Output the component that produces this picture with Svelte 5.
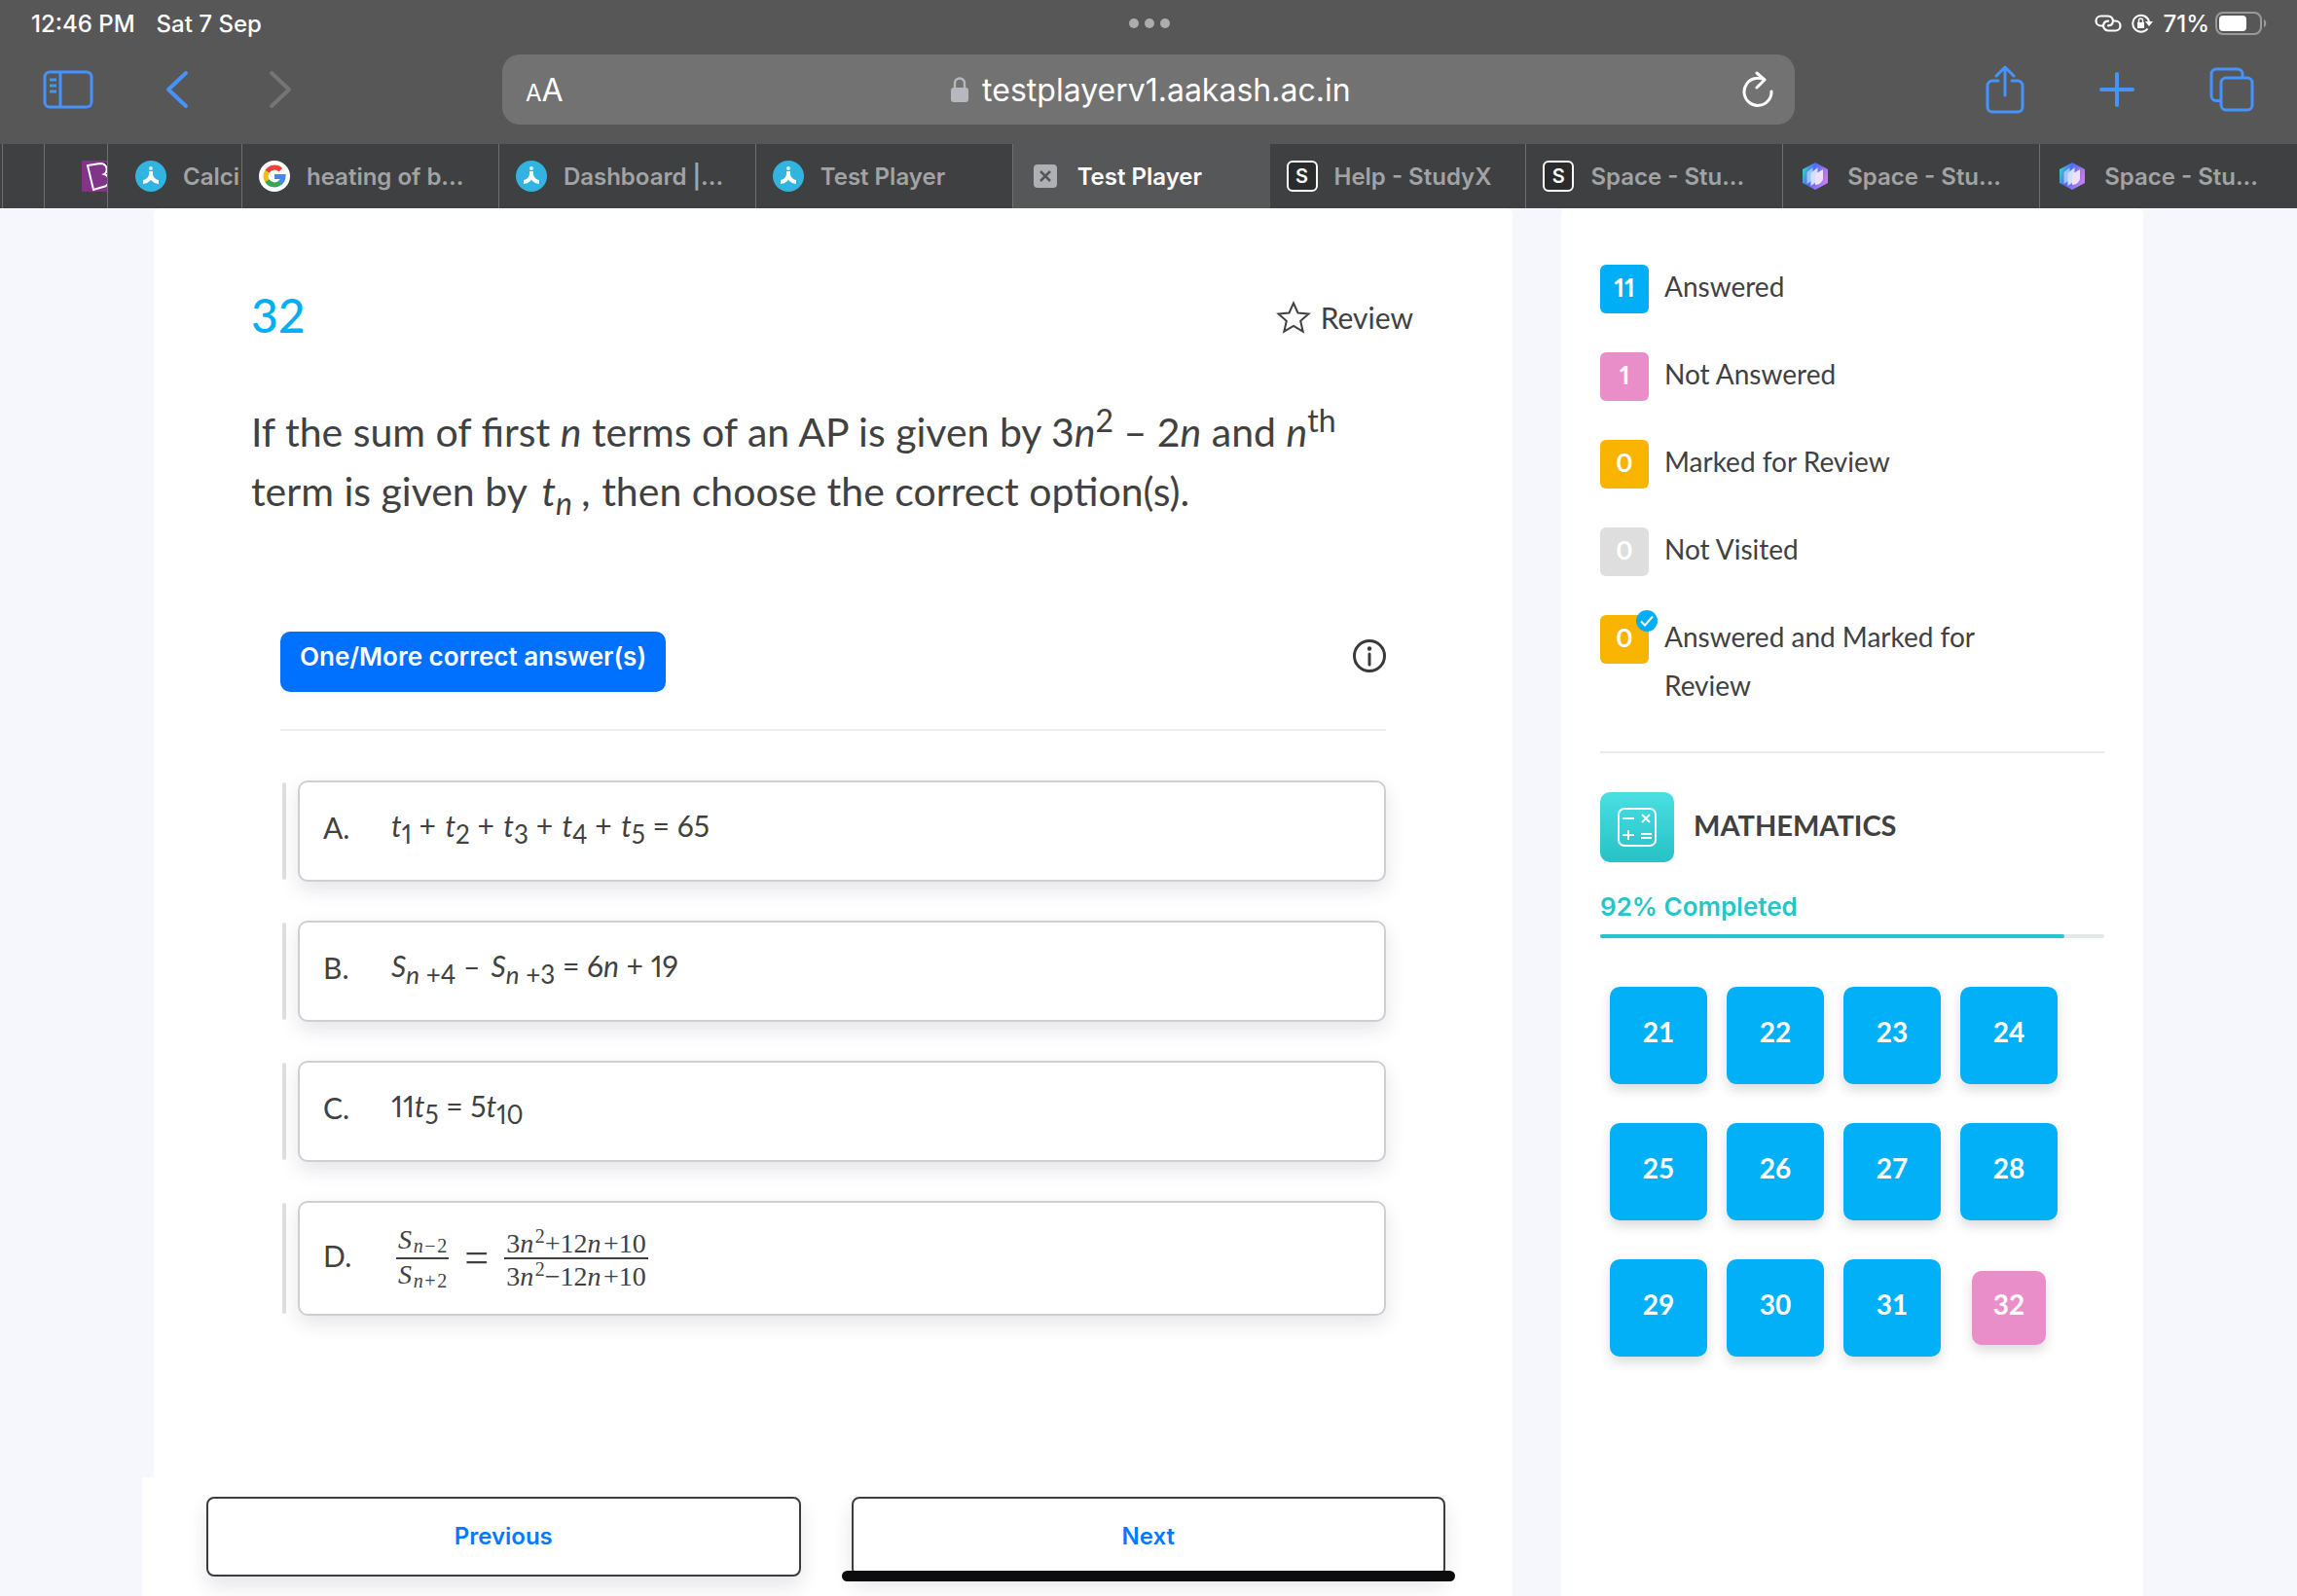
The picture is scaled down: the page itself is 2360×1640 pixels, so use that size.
<script>
  const tabs = [
    { icon: 'aakash', title: 'Dashboard |...' },
    { icon: 'aakash', title: 'Test Player' },
    { icon: 'close', title: 'Test Player', active: true },
    { icon: 'studyx', title: 'Help - StudyX' },
    { icon: 'studyx', title: 'Space - Stu...' },
    { icon: 'prism', title: 'Space - Stu...' },
    { icon: 'prism', title: 'Space - Stu...' }
  ];

  const legend = [
    { count: 11, label: 'Answered', kind: 'answered' },
    { count: 1, label: 'Not Answered', kind: 'not-answered' },
    { count: 0, label: 'Marked for Review', kind: 'marked' },
    { count: 0, label: 'Not Visited', kind: 'not-visited' },
    { count: 0, label: 'Answered and Marked for Review', kind: 'marked', checked: true }
  ];

  const questions = Array.from({ length: 12 }, (_, i) => 21 + i);
  const progress = 92;

  let current = $state(32);
  let selected = $state([]);
</script>

{#snippet favicon(name)}
  {#if name === 'aakash'}
    <svg class="favicon" viewBox="0 0 32 32">
      <circle cx="16" cy="16" r="16" fill="#31b4e0" />
      <path d="M16 11v4M16 14c0 4-4 8-8 8M16 14c0 4 4 8 8 8" fill="none" stroke="#fff" stroke-width="4" />
      <circle cx="16" cy="8" r="2" fill="#d9f1fa" />
    </svg>
  {:else if name === 'google'}
    <svg class="favicon" viewBox="0 0 32 32">
      <circle cx="16" cy="16" r="16" fill="#fff" />
      <g fill="none" stroke-width="5">
        <path d="M8.4 11.4A9 9 0 0 1 22.4 9.7" stroke="#ea4335" />
        <path d="M8.4 20.6A9 9 0 0 1 8.4 11.4" stroke="#fbbc05" />
        <path d="M22 22.7A9 9 0 0 1 8.4 20.6" stroke="#34a853" />
        <path d="M16 16.4h9A9 9 0 0 1 21.6 23" stroke="#4285f4" />
      </g>
    </svg>
  {:else if name === 'studyx'}
    <span class="favicon studyx">S</span>
  {:else if name === 'prism'}
    <svg class="favicon" viewBox="0 0 32 32">
      <defs>
        <linearGradient id="prism" x1="0" y1="0" x2="1" y2="0.4">
          <stop offset="0" stop-color="#2df0c0" />
          <stop offset="0.45" stop-color="#4b6cf5" />
          <stop offset="1" stop-color="#c07bf5" />
        </linearGradient>
      </defs>
      <path d="M16 2l13 7v14l-13 7-13-7V9z" fill="url(#prism)" />
      <path d="M7.500 12l6-5v13l-6 4z" fill="#9fc3fb" />
      <path d="M11.500 13l7-6v14l-7 5z" fill="#d3e0fd" />
      <path d="M16 14l8-5v9c0 4-4 7-8 7z" fill="#efe2fd" />
    </svg>
  {:else if name === 'byjus'}
    <svg class="favicon" viewBox="0 0 32 32">
      <path d="M0 0h32v32H0z" fill="#813588" />
      <path d="M8 4l14-2c8 0 8 9 4 12 6 2 5 12-2 13l-10 3z" fill="#4c1a52" />
      <path d="M6 5l13-2c8 0 8 9 4 11 7 2 6 12-1 13l-10 3z" fill="#813588" stroke="#fff" stroke-width="2" />
    </svg>
  {:else}
    <svg class="favicon" viewBox="0 0 32 32">
      <rect x="4" y="4" width="24" height="24" rx="4" fill="#aeb0b3" />
      <path d="M11 11l10 10M21 11L11 21" stroke="#55565a" stroke-width="2.500" />
    </svg>
  {/if}
{/snippet}

{#snippet option(letter, body)}
  <div class="option">
    <button class="option-box" class:tall={letter === 'D'} onclick={() => selected.push(letter)}>
      <span class="letter">{letter}.</span>
      {@render body()}
    </button>
  </div>
{/snippet}

{#snippet optionA()}
  <span class="formula"><i>t</i><sub>1</sub> + <i>&hairsp;t</i><sub>2</sub> + <i>&hairsp;t</i><sub>3</sub> + <i>&hairsp;t</i><sub>4</sub> + <i>&hairsp;t</i><sub>5</sub> = 65</span>
{/snippet}
{#snippet optionB()}
  <span class="formula"><i>S</i><sub><i>n</i> +4</sub> – <i>&thinsp;S</i><sub><i>n</i> +3</sub> = 6<i>n</i> + 19</span>
{/snippet}
{#snippet optionC()}
  <span class="formula">11<i>t</i><sub>5</sub> = 5<i>t</i><sub>10</sub></span>
{/snippet}
{#snippet optionD()}
  <span class="math">
    <span class="frac subscripted">
      <span><i>S</i><sub>&hairsp;<i>n</i>&hairsp;−&hairsp;2</sub></span>
      <span><i>S</i><sub>&hairsp;<i>n</i>&hairsp;+&hairsp;2</sub></span>
    </span>
    <span class="equals">=</span>
    <span class="frac">
      <span>3<i>n</i><sup>&hairsp;2</sup>+12<i>n</i>&hairsp;+10</span>
      <span>3<i>n</i><sup>&hairsp;2</sup>−12<i>n</i>&hairsp;+10</span>
    </span>
  </span>
{/snippet}

<div class="screen">
  <header class="chrome">
    <div class="status">
      <div class="status-side">
        <span>12:46 PM</span>
        <span>Sat 7 Sep</span>
      </div>
      <div class="dots"><span></span><span></span><span></span></div>
      <div class="status-side right">
        <svg width="28" height="18" viewBox="0 0 28 18" fill="none" stroke="#fff" stroke-width="2.200" stroke-linecap="round">
          <path d="M8.500 11.500H6.500a5 5 0 0 1 0-10H14a5 5 0 0 1 4.500 7.200c-1 2-2.500 2.600-4.500 2.600" />
          <path d="M19.500 6.500h2a5 5 0 0 1 0 10H14A5 5 0 0 1 9.500 9.300c1-2 2.500-2.600 4.500-2.600" />
        </svg>
        <svg width="22" height="20" viewBox="0 0 22 20" fill="none" stroke="#fff" stroke-width="2">
          <path d="M16.500 15.500A8.500 8.500 0 1 1 18 8" />
          <path d="M14 8h8l-4 5z" fill="#fff" stroke="none" />
          <path d="M6 9h7v6H6z" fill="#fff" stroke="none" />
          <path d="M7.500 9V7a2 2 0 0 1 4 0v2" stroke-width="1.500" />
        </svg>
        <span>71%</span>
        <svg class="battery" width="54" height="24" viewBox="0 0 54 24">
          <rect x="1" y="1" width="46" height="22" rx="7" fill="none" stroke="#9a9a9a" stroke-width="2" />
          <rect x="4" y="4" width="28" height="16" rx="4" fill="#fff" />
          <path d="M50 8c3 1 3 7 0 8z" fill="#9a9a9a" />
        </svg>
      </div>
    </div>

    <div class="toolbar">
      <div class="tools">
        <button class="tool" aria-label="Sidebar">
          <svg width="52" height="40" viewBox="0 0 52 40" fill="none" stroke="#4593ff" stroke-width="3">
            <rect x="2" y="2" width="48" height="36" rx="5" />
            <path d="M18 2v36M7 10h7M7 16h7M7 22h7" />
          </svg>
        </button>
        <button class="tool back" aria-label="Back">
          <svg width="24" height="40" viewBox="0 0 24 40" fill="none" stroke="#4593ff" stroke-width="4" stroke-linecap="round" stroke-linejoin="round">
            <path d="M21 3L3 20l18 17" />
          </svg>
        </button>
        <button class="tool forward" aria-label="Forward" disabled>
          <svg width="24" height="40" viewBox="0 0 24 40" fill="none" stroke="#757575" stroke-width="4" stroke-linecap="round" stroke-linejoin="round">
            <path d="M3 3l18 17L3 37" />
          </svg>
        </button>
      </div>
      <div class="address">
        <button class="text-size" aria-label="Text size"><small>A</small>A</button>
        <div class="url">
          <svg width="18" height="28" viewBox="0 0 18 28">
            <rect y="12" width="18" height="15" rx="3" fill="#b7b8bf" />
            <path d="M4 13V7.500a5 5 0 0 1 10 0V13" fill="none" stroke="#b7b8bf" stroke-width="2.400" />
          </svg>
          <span>testplayerv1.aakash.ac.in</span>
        </div>
        <button class="tool" aria-label="Reload">
          <svg width="32" height="38" viewBox="0 0 32 38" fill="none" stroke="#fff" stroke-width="3" stroke-linecap="round" stroke-linejoin="round">
            <path d="M22 8.500C19 7 16 7 13.500 7.600A14 14 0 1 0 30 21" />
            <path d="M15 2l8 7-8 8" />
          </svg>
        </button>
      </div>
      <div class="tools end">
        <button class="tool" aria-label="Share">
          <svg width="40" height="50" viewBox="0 0 40 50" fill="none" stroke="#4593ff" stroke-width="3" stroke-linecap="round" stroke-linejoin="round">
            <path d="M13 16H7a5 5 0 0 0-5 5v22a5 5 0 0 0 5 5h26a5 5 0 0 0 5-5V21a5 5 0 0 0-5-5h-6" />
            <path d="M20 31V3M11 11l9-9 9 9" />
          </svg>
        </button>
        <button class="tool" aria-label="New tab">
          <svg width="36" height="36" viewBox="0 0 36 36" stroke="#4593ff" stroke-width="4" stroke-linecap="round">
            <path d="M18 2v32M2 18h32" />
          </svg>
        </button>
        <button class="tool" aria-label="All tabs">
          <svg width="46" height="46" viewBox="0 0 46 46" fill="none" stroke="#4593ff" stroke-width="3">
            <path d="M12 34.500H7a5 5 0 0 1-5-5V7a5 5 0 0 1 5-5h22a5 5 0 0 1 5 5v4" />
            <rect x="12" y="11" width="32" height="33" rx="5" />
          </svg>
        </button>
      </div>
    </div>

    <nav class="tabs">
      <div class="tab stub"></div>
      <div class="tab sliver"></div>
      <button class="tab byjus" aria-label="Byju's">{@render favicon('byjus')}</button>
      <button class="tab calci">{@render favicon('aakash')}<span>Calci</span></button>
      <button class="tab wide">{@render favicon('google')}<span>heating of b...</span></button>
      {#each tabs as tab}
        <button class="tab wide" class:active={tab.active}>
          {@render favicon(tab.icon)}<span>{tab.title}</span>
        </button>
      {/each}
    </nav>
  </header>

  <div class="page">
    <main class="question-card">
      <div class="question">
        <div class="question-head">
          <h1>{current}</h1>
          <button class="review">
            <svg width="36" height="34" viewBox="0 0 36 34" fill="none" stroke="#414141" stroke-width="2">
              <path d="M18 2.500l4.500 10 11 1-8.300 7.300 2.500 10.900L18 26l-9.700 5.700 2.500-10.900L2.500 13.500l11-1z" />
            </svg>
            Review
          </button>
        </div>
        <p class="prompt">
          If the sum of first <i>n</i> terms of an AP is given by 3<i>n</i><sup>2</sup> – 2<i>n</i> and <i>n</i><sup>th</sup><br />
          term is given by &thinsp;<i>t</i><sub><i>n</i></sub> <i>,</i> then choose the correct option(s).
        </p>

        <div class="answers">
          <div class="answers-head">
            <span class="type-badge">One/More correct answer(s)</span>
            <button class="info" aria-label="Information">
              <svg width="34" height="34" viewBox="0 0 34 34">
                <circle cx="17" cy="17" r="15.500" fill="none" stroke="#3a3a3a" stroke-width="3" />
                <circle cx="17" cy="9.500" r="2.200" fill="#3a3a3a" />
                <path d="M17 15v11" stroke="#3a3a3a" stroke-width="3" stroke-linecap="round" />
              </svg>
            </button>
          </div>
          <div class="options">
            {@render option('A', optionA)}
            {@render option('B', optionB)}
            {@render option('C', optionC)}
            {@render option('D', optionD)}
          </div>
        </div>
      </div>

      <footer class="pager">
        <button>Previous</button>
        <button>Next</button>
      </footer>
    </main>

    <aside class="summary">
      <ul class="legend">
        {#each legend as item}
          <li>
            <span class="count {item.kind}">
              {item.count}
              {#if item.checked}
                <svg class="check" width="22" height="22" viewBox="0 0 22 22">
                  <circle cx="11" cy="11" r="11" fill="#00aef6" />
                  <path d="M5 11.500l4 4 8-9" fill="none" stroke="#fff" stroke-width="2" />
                </svg>
              {/if}
            </span>
            <span class="legend-label">{item.label}</span>
          </li>
        {/each}
      </ul>

      <div class="subject">
        <svg width="76" height="72" viewBox="0 0 76 72">
          <defs>
            <linearGradient id="teal" x1="0" y1="0" x2="0" y2="1">
              <stop offset="0" stop-color="#4adfe3" />
              <stop offset="1" stop-color="#26c2c6" />
            </linearGradient>
          </defs>
          <rect width="76" height="72" rx="10" fill="url(#teal)" />
          <g fill="none" stroke="#fff" stroke-width="2">
            <rect x="19" y="17" width="38" height="38" rx="6" />
            <path d="M23 27h12M43 23l8 8M51 23l-8 8M23 44h12M29 39v10M42 43h11M42 47h11" />
          </g>
        </svg>
        <h2>MATHEMATICS</h2>
      </div>

      <div class="completed">{progress}% Completed</div>
      <div class="progress"><div class="progress-fill" style="width: {progress}%"></div></div>

      <div class="palette">
        {#each questions as q}
          <button class:current={q === 32} onclick={() => (current = q)}>{q}</button>
        {/each}
      </div>
    </aside>
  </div>

  <div class="home-indicator"></div>
</div>

<style>
  :global(body) {
    background: #f5f7fc;
  }

  .screen {
    position: relative;
    display: flex;
    flex-direction: column;
    height: 100vh;
    overflow: hidden;
    background: #f5f7fc;
    color: #414141;
    font-family: Lato, sans-serif;
  }

  button {
    margin: 0;
    padding: 0;
    border: none;
    background: none;
    color: inherit;
    font: inherit;
    cursor: pointer;
  }

  svg {
    display: block;
    flex-shrink: 0;
  }

  /* browser chrome */
  .chrome {
    flex-shrink: 0;
    background: #575757;
    color: #fff;
    font-family: Inter, sans-serif;
  }

  .status {
    display: grid;
    grid-template-columns: 1fr auto 1fr;
    align-items: center;
    height: 48px;
    padding: 0 30px 0 32px;
    font-size: 24px;
    font-weight: 500;
  }

  .status-side {
    display: flex;
    align-items: center;
    gap: 22px;
  }

  .status-side.right {
    justify-content: flex-end;
    gap: 10px;
  }

  .battery {
    margin-left: -4px;
  }

  .dots {
    display: flex;
    gap: 6px;
  }

  .dots span {
    width: 10px;
    height: 10px;
    border-radius: 50%;
    background: #adadad;
  }

  .toolbar {
    display: flex;
    align-items: center;
    height: 72px;
    padding: 8px 44px 20px;
  }

  .tools {
    display: flex;
    flex: 1;
    align-items: center;
  }

  .tools.end {
    justify-content: flex-end;
    gap: 77px;
  }

  .back {
    margin-left: 74px;
  }

  .forward {
    margin-left: 82px;
  }

  .address {
    display: flex;
    flex: 0 1 1282px;
    align-items: center;
    height: 72px;
    padding: 0 22px 0 24px;
    border-radius: 18px;
    background: #727272;
  }

  .text-size {
    font-size: 32px;
  }

  .text-size small {
    font-size: 24px;
  }

  .url {
    display: flex;
    flex: 1;
    justify-content: center;
    align-items: center;
    gap: 14px;
    padding-right: 4px;
    font-size: 32px;
  }

  .tabs {
    display: flex;
    height: 66px;
  }

  .tab {
    display: flex;
    flex-shrink: 0;
    align-items: center;
    gap: 17px;
    box-sizing: border-box;
    overflow: hidden;
    border-right: 1px solid #6e6f71;
    background: #3f4042;
    color: #a2a3a5;
    font-size: 24px;
    font-weight: 600;
    white-space: nowrap;
  }

  .stub {
    width: 3px;
  }

  .sliver {
    width: 43px;
  }

  .byjus {
    width: 65px;
    padding-left: 38px;
  }

  .calci {
    width: 138px;
    padding-left: 28px;
  }

  .wide {
    flex: 1;
    padding-left: 17px;
  }

  .wide:last-child {
    border-right-color: #3f4042;
  }

  .tab.active {
    border-color: #565759;
    background: #565759;
    color: #fff;
  }

  .favicon {
    width: 32px;
    height: 32px;
  }

  .studyx {
    display: flex;
    flex-shrink: 0;
    justify-content: center;
    align-items: center;
    box-sizing: border-box;
    border: 2px solid #fff;
    border-radius: 6px;
    background: #2b2b2b;
    color: #fff;
    font-size: 20px;
  }

  /* page */
  .page {
    display: flex;
    flex: 1;
    justify-content: space-between;
    gap: 50px;
    min-height: 0;
    padding: 0 158px 0 146px;
  }

  .question-card {
    display: flex;
    flex: 1;
    flex-direction: column;
  }

  .question {
    flex: 1;
    margin-left: 12px;
    padding: 76px 100px 0;
    border-radius: 6px 6px 0 0;
    background: #fff;
  }

  .question-head {
    display: flex;
    justify-content: space-between;
    align-items: center;
    height: 72px;
    padding-right: 2px;
  }

  h1 {
    margin: 0;
    padding-bottom: 6px;
    color: #00aef6;
    font-size: 48px;
    font-weight: 500;
  }

  .review {
    display: flex;
    align-items: center;
    gap: 10px;
    font-size: 30px;
  }

  .prompt {
    margin: 51px 0 114px;
    font-size: 41px;
    line-height: 61px;
  }

  .prompt sup,
  .prompt sub {
    font-size: 32px;
    line-height: 0;
  }

  .formula {
    padding-bottom: 4px;
    font-variant-numeric: proportional-nums;
  }

  .formula sub {
    font-size: 26px;
    line-height: 0;
  }

  .answers {
    padding: 0 30px;
  }

  .answers-head {
    display: flex;
    justify-content: space-between;
    align-items: flex-start;
    padding-bottom: 38px;
    border-bottom: 2px solid #eeebec;
  }

  .type-badge {
    padding: 8px 20px 18px;
    border-radius: 10px;
    background: #0070ff;
    color: #fff;
    font-family: Inter, sans-serif;
    font-size: 26px;
    font-weight: 600;
    line-height: 36px;
  }

  .info {
    margin-top: 8px;
  }

  .options {
    display: flex;
    flex-direction: column;
    gap: 40px;
    padding-top: 51px;
  }

  .option {
    display: flex;
    gap: 12px;
    padding-left: 2px;
  }

  .option::before {
    width: 4px;
    margin: 2px 0;
    border-radius: 2px;
    background: #dedede;
    content: '';
  }

  .option-box {
    display: flex;
    flex: 1;
    align-items: center;
    box-sizing: border-box;
    height: 104px;
    padding: 0 24px 8px;
    border: 2px solid #cfcfcf;
    border-radius: 10px;
    background: #fff;
    box-shadow: 0 8px 20px rgba(40, 40, 70, 0.12);
    font-size: 30px;
    text-align: left;
  }

  .option-box.tall {
    height: 118px;
    padding-bottom: 6px;
  }

  .letter {
    width: 70px;
  }

  .math {
    display: flex;
    align-items: center;
    padding: 6px 0 0 5px;
    font-family: 'Liberation Serif', serif;
    font-size: 28px;
  }

  .frac {
    display: flex;
    flex-direction: column;
    line-height: 28px;
    text-align: center;
  }

  .frac > span {
    padding: 4px 2px 0;
  }

  .frac > span:first-child {
    border-bottom: 2px solid #414141;
  }

  .frac.subscripted > span:first-child {
    padding: 0 2px 4px;
  }

  .frac.subscripted > span:last-child {
    padding: 2px 2px 2px;
  }

  .frac sub,
  .frac sup {
    font-size: 20px;
    line-height: 0;
  }

  .frac sub {
    vertical-align: -4px;
  }

  .equals {
    padding: 0 16px;
    font-size: 44px;
    line-height: 32px;
  }

  .pager {
    display: grid;
    grid-template-columns: 1fr 1fr;
    gap: 52px;
    height: 122px;
    box-sizing: border-box;
    padding: 20px 69px 20px 66px;
    background: #fff;
  }

  .pager button {
    padding-bottom: 2px;
    border: 2px solid #3c3c3c;
    border-radius: 8px;
    box-shadow: 0 10px 20px rgba(40, 40, 70, 0.12);
    color: #007bff;
    font-family: Inter, sans-serif;
    font-size: 24px;
    font-weight: 600;
  }

  /* right panel */
  .summary {
    flex: 0 0 598px;
    box-sizing: border-box;
    padding: 58px 40px 0;
    border-radius: 6px 6px 0 0;
    background: #fff;
  }

  .legend {
    display: flex;
    flex-direction: column;
    gap: 40px;
    margin: 0;
    padding: 0 0 43px;
    border-bottom: 2px solid #ebebeb;
    list-style: none;
    font-size: 28px;
  }

  .legend li {
    display: flex;
    gap: 16px;
    padding-right: 60px;
  }

  .legend-label {
    margin-top: -3px;
    line-height: 50px;
  }

  .count {
    position: relative;
    flex: 0 0 50px;
    height: 50px;
    border-radius: 6px;
    color: #fff;
    font-size: 26px;
    font-weight: 700;
    line-height: 46px;
    text-align: center;
    font-variant-numeric: proportional-nums;
  }

  .answered {
    background: #00aef6;
  }

  .not-answered {
    background: #e98ec9;
  }

  .marked {
    background: #f8b400;
  }

  .not-visited {
    background: #dedede;
  }

  .check {
    position: absolute;
    top: -5px;
    right: -9px;
  }

  .subject {
    display: flex;
    align-items: center;
    gap: 20px;
    padding-top: 40px;
  }

  h2 {
    margin: 0;
    padding-bottom: 6px;
    font-size: 29px;
    font-weight: 700;
  }

  .completed {
    padding: 28px 0 10px;
    color: #25c5c9;
    font-family: Inter, sans-serif;
    font-size: 26px;
    font-weight: 600;
    line-height: 36px;
  }

  .progress {
    height: 4px;
    border-radius: 2px;
    background: #e4e9e8;
  }

  .progress-fill {
    height: 4px;
    border-radius: 2px;
    background: #25c5c9;
  }

  .palette {
    display: grid;
    grid-template-columns: repeat(4, 100px);
    gap: 40px 20px;
    padding: 50px 10px;
  }

  .palette button {
    height: 100px;
    padding-bottom: 8px;
    border-radius: 10px;
    background: #02b0f8;
    box-shadow: 0 6px 12px rgba(40, 40, 70, 0.16);
    color: #fff;
    font-size: 28px;
    font-weight: 700;
  }

  .palette .current {
    place-self: center;
    width: 76px;
    height: 76px;
    background: #e98ec9;
  }

  .home-indicator {
    position: absolute;
    bottom: 15px;
    left: 50%;
    width: 630px;
    height: 11px;
    margin-left: -315px;
    border-radius: 6px;
    background: #0d0d0d;
  }
</style>
